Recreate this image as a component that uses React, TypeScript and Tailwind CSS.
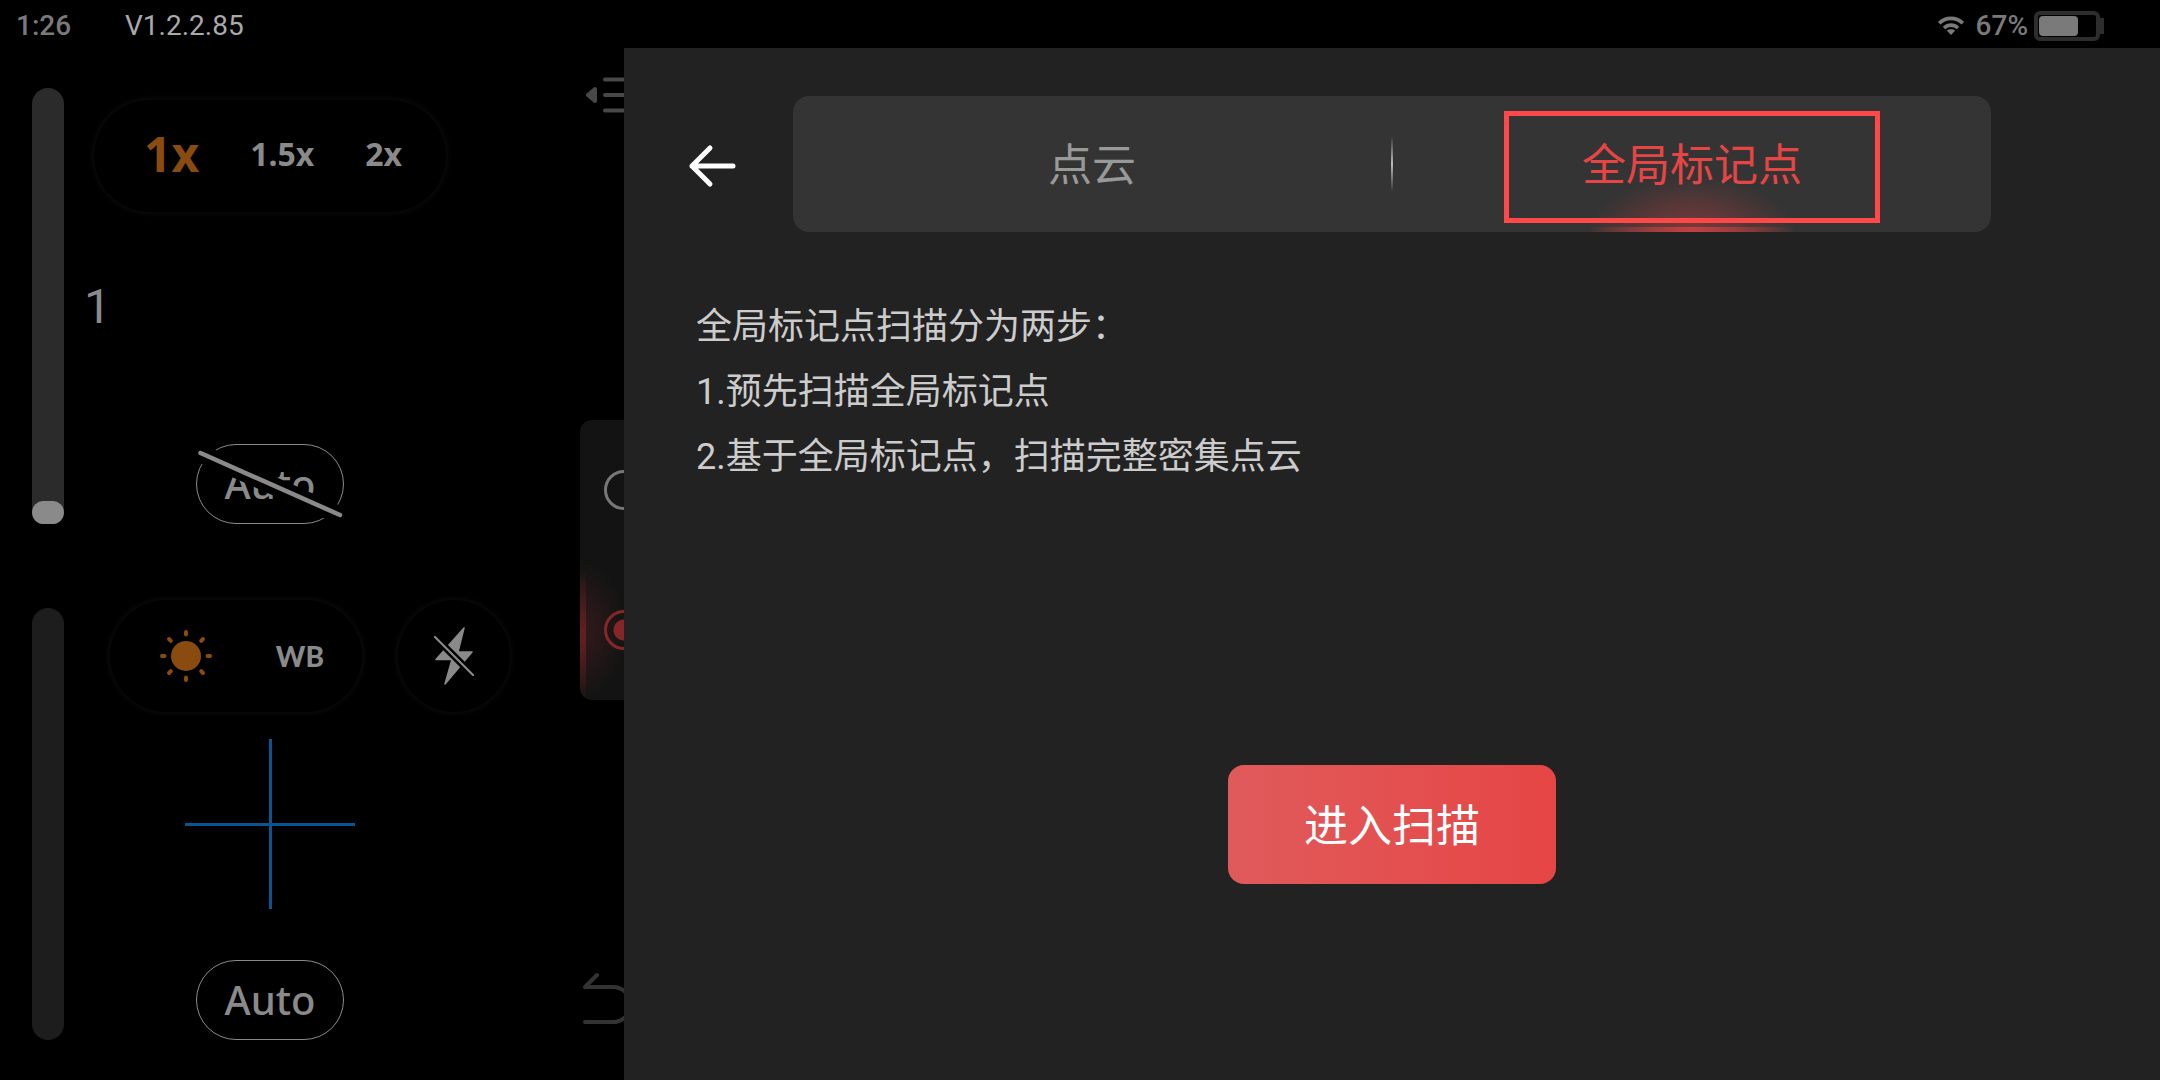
import { useState } from "react";

const ZOOM_LEVELS = ["1x", "1.5x", "2x"];

const STEPS = [
  "全局标记点扫描分为两步：",
  "1.预先扫描全局标记点",
  "2.基于全局标记点，扫描完整密集点云",
];

function WifiIcon() {
  return (
    <svg width="26" height="20" viewBox="0 0 26 20" fill="none" stroke="#7a7a7a" strokeWidth="3.6">
      <path d="M1.2 7.2C8 .8 18 .8 24.8 7.2" />
      <path d="M6 12c4-3.8 10-3.8 14 0" />
      <path d="M13 19l-4.2-4.4c2.4-1.8 6-1.8 8.4 0z" fill="#7a7a7a" stroke="none" />
    </svg>
  );
}

function BatteryIcon() {
  return (
    <svg width="70" height="30" viewBox="0 0 70 30">
      <rect x="2" y="2" width="62" height="26" rx="4" fill="none" stroke="#2d2d2d" strokeWidth="4" />
      <rect x="66" y="7" width="4" height="16" fill="#2d2d2d" />
      <rect x="5" y="5" width="39" height="20" rx="4" fill="#7a7a7a" />
    </svg>
  );
}

function StatusBar() {
  return (
    <header className="flex h-12 items-center bg-black pl-4 pr-14 pt-1 text-[28px] leading-none text-[#7a7a7a]">
      <span className="w-[109px] font-medium">1:26</span>
      <span className="text-[#aaaaaa]">V1.2.2.85</span>
      <div className="ml-auto flex items-center">
        <WifiIcon />
        <span className="ml-3 mr-1.5 font-medium">67%</span>
        <BatteryIcon />
      </div>
    </header>
  );
}

function SunIcon() {
  const angles = [0, 45, 90, 135, 180, 225, 270, 315];
  return (
    <svg width="52" height="52" viewBox="0 0 52 52">
      <circle cx="26" cy="26" r="15" fill="#8a4b10" />
      {angles.map((a) => (
        <line
          key={a}
          x1="26"
          y1="2"
          x2="26"
          y2="4.5"
          stroke="#8a4b10"
          strokeWidth="4"
          strokeLinecap="round"
          transform={`rotate(${a} 26 26)`}
        />
      ))}
    </svg>
  );
}

function FlashOffIcon() {
  return (
    <svg width="40" height="60" viewBox="0 0 40 60">
      <path
        d="M30 2L2 33.500h16L11 58 38 26H24z"
        fill="#8a8a8a"
        stroke="#8a8a8a"
        strokeWidth="1.5"
        strokeLinejoin="round"
      />
      <path d="M1 11l38 38" stroke="#000" strokeWidth="7" />
      <path d="M1 11l38 38" stroke="#8a8a8a" strokeWidth="2.2" strokeLinecap="round" />
    </svg>
  );
}

function AutoButton({ off = false }: { off?: boolean }) {
  return (
    <button
      aria-label={off ? "Auto off" : undefined}
      className="relative flex h-20 w-[148px] items-center justify-center rounded-full border border-[#8a8a8a] text-[40px] font-medium leading-none text-[#8a8a8a] font-['Noto_Sans',sans-serif]"
    >
      Auto
      {off && (
        <svg className="absolute -inset-px" width="148" height="80" viewBox="0 0 148 80" overflow="visible">
          <path d="M-4 5.500L152 75" stroke="#000" strokeWidth="18" />
          <path d="M4.500 9L144 71" stroke="#8a8a8a" strokeWidth="4.500" strokeLinecap="round" />
        </svg>
      )}
    </button>
  );
}

function CameraControls() {
  const [zoom, setZoom] = useState("1x");
  const [focus, setFocus] = useState(0);
  const [exposure, setExposure] = useState(0);

  return (
    <>
      <div className="flex flex-col pl-8 pt-10">
        <input
          type="range"
          aria-label="Focus"
          value={focus}
          onChange={(e) => setFocus(Number(e.target.value))}
          className="h-[436px] w-8 appearance-none rounded-full bg-[#2b2b2b] [direction:rtl] [writing-mode:vertical-lr] [&::-webkit-slider-thumb]:h-[23px] [&::-webkit-slider-thumb]:w-8 [&::-webkit-slider-thumb]:appearance-none [&::-webkit-slider-thumb]:rounded-full [&::-webkit-slider-thumb]:bg-[#8a8a8a]"
        />
        <input
          type="range"
          aria-label="Exposure"
          value={exposure}
          onChange={(e) => setExposure(Number(e.target.value))}
          className="mt-[84px] h-[432px] w-8 appearance-none rounded-full bg-[#1d1d1d] [direction:rtl] [writing-mode:vertical-lr] [&::-webkit-slider-thumb]:h-[23px] [&::-webkit-slider-thumb]:w-8 [&::-webkit-slider-thumb]:appearance-none [&::-webkit-slider-thumb]:opacity-0"
        />
      </div>

      <div className="flex flex-1 flex-col items-start pl-[30px] pt-[52px]">
        <div className="flex h-28 w-[352px] items-center gap-[51px] rounded-full bg-black pb-1 pl-[50px] font-bold leading-none shadow-[0_0_6px_1px_#0e0e0e] font-['Noto_Sans',sans-serif]">
          {ZOOM_LEVELS.map((level) => (
            <button
              key={level}
              onClick={() => setZoom(level)}
              className={level === zoom ? "text-[48px] text-[#8a4b10]" : "text-[32px] text-[#8a8a8a]"}
            >
              {level}
            </button>
          ))}
        </div>

        <span className="-ml-2.5 mt-[67px] text-[48px] leading-[56px] text-[#8a8a8a]">1</span>

        <div className="mt-[109px] flex w-[352px] justify-center">
          <AutoButton off />
        </div>

        <div className="ml-4 mt-[76px] flex h-28 gap-9">
          <div className="flex w-[252px] items-center justify-between rounded-full pl-[50px] pr-[38px] shadow-[0_0_6px_1px_#0e0e0e]">
            <button aria-label="Brightness">
              <SunIcon />
            </button>
            <button className="text-[28px] font-black leading-none text-[#8a8a8a] [font-family:'Lato',sans-serif]">
              WB
            </button>
          </div>
          <button
            aria-label="Flash off"
            className="flex w-28 items-center justify-center rounded-full shadow-[0_0_6px_1px_#0e0e0e]"
          >
            <FlashOffIcon />
          </button>
        </div>

        <div className="mt-[26px] flex w-[352px] flex-col items-center gap-[50px]">
          <svg width="172" height="172" viewBox="0 0 172 172" stroke="#0a5490" strokeWidth="3">
            <path d="M86.500 1v170M1 86.500h170" />
          </svg>
          <AutoButton />
        </div>
      </div>
    </>
  );
}

function ModeStrip() {
  const [mode, setMode] = useState("record");
  const radio =
    "relative size-10 appearance-none rounded-full border-3 border-[#777777] checked:border-[#852628] checked:bg-[radial-gradient(circle,#852628_10px,transparent_11px)]";

  return (
    <div className="w-11 shrink-0 pt-7">
      <button aria-label="Menu" className="ml-1.5 block">
        <svg width="54" height="38" viewBox="0 0 54 38" stroke="#484848" strokeWidth="4" strokeLinecap="round">
          <path d="M19 3.500h34M19 19h34M19 34.500h34" />
          <path d="M2 19l7-6v12z" fill="#484848" strokeLinejoin="round" />
        </svg>
      </button>

      <div className="relative mt-[306px] flex h-[280px] w-[88px] flex-col items-center gap-[100px] overflow-hidden rounded-xl bg-[#131313] pt-[50px]">
        <div className="absolute bottom-0 left-0 h-[140px] w-12 bg-[radial-gradient(ellipse_at_left,#341a1b,transparent_70%)]" />
        <div className="absolute bottom-0 left-0 h-[130px] w-1.5 bg-linear-to-b from-transparent via-[#641f20] to-transparent" />
        <input
          type="radio"
          name="mode"
          aria-label="Standby"
          checked={mode === "standby"}
          onChange={() => setMode("standby")}
          className={radio}
        />
        <input
          type="radio"
          name="mode"
          aria-label="Record"
          checked={mode === "record"}
          onChange={() => setMode("record")}
          className={radio}
        />
      </div>

      <button aria-label="Undo" className="ml-[3px] mt-[272px] block">
        <svg width="60" height="54" viewBox="0 0 60 54" fill="none" stroke="#333333" strokeWidth="4">
          <path d="M14 3L2 15H30a17.500 17.500 0 0 1 0 35H2" strokeLinecap="round" strokeLinejoin="round" />
        </svg>
      </button>
    </div>
  );
}

function ScanDrawer() {
  const [tab, setTab] = useState("markers");

  return (
    <section className="flex flex-1 flex-col bg-[#222222] pt-12">
      <div className="grid grid-cols-[11%_78%_11%] items-center">
        <button aria-label="返回" className="ml-16 w-12 pt-1">
          <svg width="48" height="44" viewBox="0 0 48 44" fill="none" stroke="#fff" strokeWidth="5">
            <path d="M22 4L4 22 22 40M4 22h41" strokeLinecap="round" strokeLinejoin="round" />
          </svg>
        </button>

        <nav className="flex h-[136px] items-center overflow-hidden rounded-2xl bg-[#343434] text-[44px]">
          <button
            onClick={() => setTab("cloud")}
            className={`h-full flex-1 pt-1 ${tab === "cloud" ? "text-[#e64545]" : "text-[#999999]"}`}
          >
            点云
          </button>
          <span className="h-14 w-0.5 bg-linear-to-b from-transparent via-[#bbbbbb] to-transparent" />
          <button
            onClick={() => setTab("markers")}
            className={`relative h-full flex-1 pt-1 ${tab === "markers" ? "text-[#e64545]" : "text-[#999999]"}`}
          >
            <span className="absolute bottom-0 left-1/2 h-14 w-52 -translate-x-1/2 bg-[radial-gradient(ellipse_at_bottom,#7c3a3b,transparent_70%)]" />
            <span className="absolute bottom-0 left-1/2 h-[5px] w-52 -translate-x-1/2 bg-linear-to-r from-transparent via-[#c44041] to-transparent" />
            <span className="absolute left-1/2 top-[15px] h-28 w-[376px] -translate-x-1/2 border-5 border-[#ff4848]" />
            <span className="relative">全局标记点</span>
          </button>
        </nav>
      </div>

      <div className="mt-[63px] pl-[72px] text-[36px] leading-[65px] text-[#cccccc]">
        {STEPS.map((step) => (
          <p key={step}>{step}</p>
        ))}
      </div>

      <button className="mx-auto mb-[196px] mt-auto h-[119px] w-[328px] rounded-2xl bg-linear-to-r from-[#e05a5b] to-[#e64545] pt-1 text-[44px] text-white">
        进入扫描
      </button>
    </section>
  );
}

export default function App() {
  return (
    <div className="flex min-h-screen flex-col bg-black font-[Roboto,'Noto_Sans_CJK_SC',sans-serif]">
      <StatusBar />
      <main className="flex flex-1">
        <div className="flex w-[624px] shrink-0 overflow-hidden">
          <CameraControls />
          <ModeStrip />
        </div>
        <ScanDrawer />
      </main>
    </div>
  );
}
